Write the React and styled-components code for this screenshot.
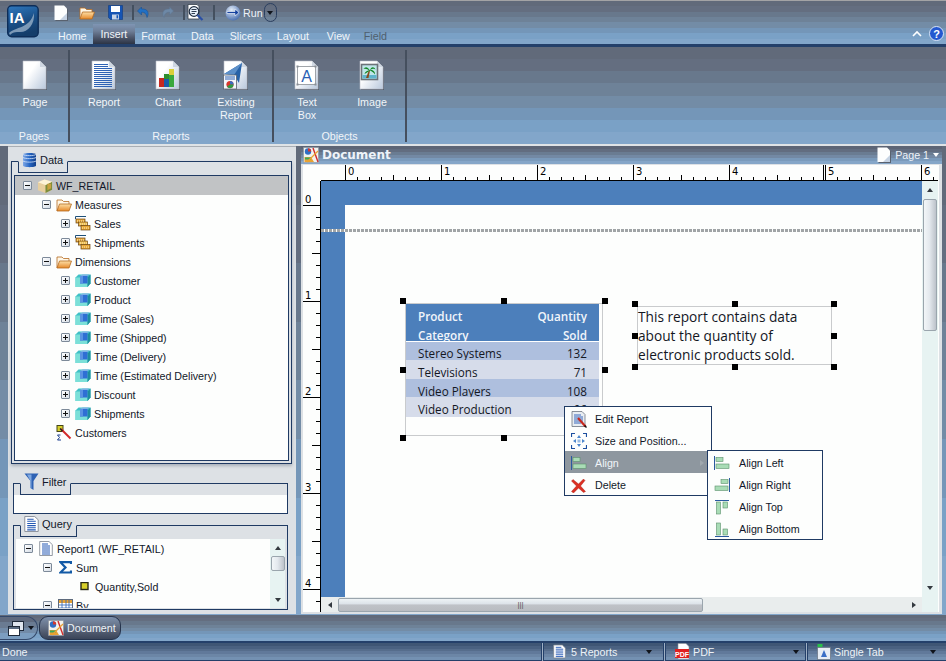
import React from "react";
import styled, { createGlobalStyle } from "styled-components";

const bands = (colors) =>
  `linear-gradient(180deg, ${colors
    .map((c, i) => `${c} ${(i / colors.length) * 100}% ${((i + 1) / colors.length) * 100}%`)
    .join(", ")})`;

const BAR = ["#616a7a", "#646e80", "#68788c", "#6e8298", "#738ca6", "#7496b8", "#7aa1c6", "#82a6ca"];
const STATUS = ["#3f5675", "#4a6181", "#566d8c", "#61799a", "#6c86a6", "#7491b2"];

const GlobalStyle = createGlobalStyle`
  html, body { margin: 0; padding: 0; background: #dde1e5; }
  body { font-family: "Liberation Sans", Arial, sans-serif; font-size: 10.7px; color: #12182a; }
  * { box-sizing: border-box; }
`;

const Shell = styled.div`
  width: 946px;
  height: 661px;
  display: flex;
  flex-direction: column;
  overflow: hidden;
`;

/* top bar */
const TopBar = styled.header`
  height: 44px;
  border-top: 1px solid #a3a3a5;
  background: ${bands(BAR)};
  display: flex;
  flex: none;
`;
const LogoBox = styled.div`
  width: 52px;
  padding: 4px 0 0 7px;
  flex: none;
`;
const TopColumn = styled.div`
  flex: 1;
  display: flex;
  flex-direction: column;
`;
const QuickRow = styled.div`
  height: 23px;
  display: flex;
  align-items: center;
  padding-left: 2px;
`;
const QuickBtn = styled.span`
  display: flex;
  margin-right: ${(p) => p.$gap || 0}px;
`;
const QuickSep = styled.i`
  width: 2px;
  height: 15px;
  background: #44505f;
  margin-right: ${(p) => p.$gap || 3}px;
`;
const RunLabel = styled.span`
  color: #eef3f8;
  margin-left: 2px;
`;
const RunDrop = styled.span`
  width: 13px;
  height: 19px;
  border: 1px solid #2b3f60;
  border-radius: 7px;
  margin-left: 1px;
  display: flex;
  align-items: center;
  justify-content: center;
`;
const Caret = styled.i`
  width: 0;
  height: 0;
  flex: none;
  border-left: 3.5px solid transparent;
  border-right: 3.5px solid transparent;
  border-top: 4px solid ${(p) => p.$color || "#10141c"};
`;
const TabStrip = styled.nav`
  height: 20px;
  display: flex;
  align-items: stretch;
`;
const MenuTab = styled.span`
  display: flex;
  align-items: center;
  margin-left: ${(p) => p.$lead || 0}px;
  margin-right: ${(p) => p.$gap}px;
  padding: ${(p) => (p.$active ? "0 8px 1px" : "4px 0 0")};
  color: ${(p) => (p.$dim ? "#4f5f6d" : "#f1f5f9")};
  background: ${(p) => (p.$active ? "linear-gradient(180deg, #7f95b4 0%, #6f7f98 35%, #4b5468 70%, #2c3445 100%)" : "none")};
`;
const TabEnd = styled.span`
  margin-left: auto;
  display: flex;
  align-items: center;
  gap: 7px;
  padding: 0 2px 1px 0;
`;
const NavyLine = styled.div`
  height: 3px;
  background: #24406a;
  flex: none;
`;

/* ribbon */
const Ribbon = styled.section`
  height: 97px;
  flex: none;
  padding-top: 3px;
  background: ${bands(BAR)};
  display: flex;
`;
const RibbonGroup = styled.div`
  width: ${(p) => p.$w}px;
  height: 92px;
  border-right: 2px solid #454f5e;
  display: flex;
  flex-direction: column;
`;
const ToolRow = styled.div`
  flex: 1;
  display: flex;
`;
const Tool = styled.div`
  width: ${(p) => p.$w}px;
  flex: none;
  padding-top: 10px;
  display: flex;
  flex-direction: column;
  align-items: center;
  color: #f1f5f9;
  text-align: center;
  line-height: 13px;
`;
const ToolText = styled.span`
  margin-top: 5px;
`;
const GroupLabel = styled.div`
  height: 13px;
  color: #f1f5f9;
  text-align: center;
  line-height: 15px;
`;

/* main */
const Main = styled.main`
  flex: none;
  height: 471px;
  border-top: 2px solid #dfe3e6;
  background: ${bands(BAR)};
  display: flex;
  padding: 0 4px 1px 8px;
  gap: 5px;
`;
const DataPanel = styled.aside`
  width: 288px;
  background: #dde1e5;
  display: flex;
  flex-direction: column;
  padding: 14px 0 0 3px;
  border-top: 1px solid #a9aeb4;
`;
const Group = styled.div`
  position: relative;
  border: 1px solid #1f3a63;
  width: ${(p) => p.$w}px;
  height: ${(p) => p.$h}px;
  margin: ${(p) => p.$margin || 0};
  padding: ${(p) => p.$pad || 0};
  box-shadow: ${(p) => (p.$shadow ? "0 2px 3px #a9b1ba" : "none")};
`;
const GroupTab = styled.div`
  position: absolute;
  left: ${(p) => p.$left}px;
  top: -1px;
  width: ${(p) => p.$w}px;
  height: 12px;
  background: #dde1e5;
  border: 1px solid #1f3a63;
  border-top: 1px solid #dde1e5;
`;
const TabLabel = styled.div`
  height: 18px;
  margin-top: -11px;
  display: flex;
  align-items: center;
  gap: 3px;
  padding-left: 3px;
  font-size: 11px;
`;
const TreeBox = styled.div`
  background: #fdfefd;
  border: 1px solid #1f3a63;
  height: 100%;
  overflow: hidden;
`;
const TreeRow = styled.div`
  height: 19px;
  display: flex;
  align-items: center;
  padding-left: ${(p) => 8 + p.$level * 19}px;
  background: ${(p) => (p.$selected ? "#c1c3c5" : "transparent")};
`;
const Expander = styled.span`
  width: 9px;
  height: 9px;
  flex: none;
  margin-right: 5px;
  visibility: ${(p) => (p.$none ? "hidden" : "visible")};
  border: 1px solid #7d8a99;
  border-radius: 1px;
  background: linear-gradient(135deg, #fff, #d5dde6);
  display: flex;
  align-items: center;
  justify-content: center;
  position: relative;
  &::before {
    content: "";
    width: 5px;
    height: 1px;
    background: #111;
  }
  &::after {
    content: "";
    position: absolute;
    width: 1px;
    height: 5px;
    background: #111;
    display: ${(p) => (p.$open ? "none" : "block")};
  }
`;
const TreeIcon = styled.span`
  width: 16px;
  height: 16px;
  flex: none;
  display: flex;
  align-items: center;
  justify-content: center;
  margin-right: 3px;
`;
const FilterWell = styled.div`
  height: 18px;
  margin-top: 11px;
  background: #fdfefd;
`;
const QueryBody = styled.div`
  display: flex;
  height: 100%;
  padding: 13px 2px 1px 2px;
`;
const QueryTree = styled.div`
  flex: 1;
  background: #fdfefd;
  overflow: hidden;
`;

/* scrollbars */
const VBar = styled.div`
  width: ${(p) => p.$w}px;
  background: #e7f3f2;
  display: flex;
  flex-direction: column;
  flex: none;
  align-items: center;
  height: 100%;
`;
const HBar = styled.div`
  height: 15px;
  background: #e9eded;
  display: flex;
  align-items: center;
`;
const ArrowBtn = styled.span`
  flex: none;
  display: flex;
  align-items: center;
  justify-content: center;
  width: ${(p) => p.$w || 15}px;
  height: ${(p) => p.$h || 15}px;
  margin-top: ${(p) => (p.$end ? "auto" : 0)};
  margin-left: ${(p) => (p.$after ? "auto" : 0)};
`;
const Tri = styled.i`
  width: 0;
  height: 0;
  ${(p) => {
    const c = p.$color || "#33393f";
    if (p.$dir === "up") return `border-left:3.5px solid transparent;border-right:3.5px solid transparent;border-bottom:4px solid ${c};`;
    if (p.$dir === "down") return `border-left:3.5px solid transparent;border-right:3.5px solid transparent;border-top:4px solid ${c};`;
    if (p.$dir === "left") return `border-top:3.5px solid transparent;border-bottom:3.5px solid transparent;border-right:4px solid ${c};`;
    return `border-top:3.5px solid transparent;border-bottom:3.5px solid transparent;border-left:4px solid ${c};`;
  }}
`;
const VThumb = styled.span`
  width: ${(p) => p.$w}px;
  height: ${(p) => p.$h}px;
  flex: none;
  border: 1px solid #9aa5ad;
  border-radius: 2px;
  background: linear-gradient(90deg, #f2f6f8 0%, #e4e9ee 45%, #bcc2ca 100%);
`;
const HThumb = styled.span`
  width: ${(p) => p.$w}px;
  height: 14px;
  flex: none;
  border: 1px solid #9aa5ad;
  border-radius: 2px;
  background: linear-gradient(180deg, #eef3f5 0%, #dde3e9 40%, #bfc2c7 50%, #b9bcc1 100%);
  display: flex;
  align-items: center;
  justify-content: center;
  color: #555;
  font-size: 8px;
  line-height: 10px;
`;

/* document pane */
const DocPane = styled.section`
  flex: 1;
  background: #dde1e5;
  display: flex;
  flex-direction: column;
  padding: 0 3px 2px 2px;
`;
const DocTitle = styled.div`
  height: 18px;
  flex: none;
  margin: 0 -3px 0 -2px;
  padding: 0 3px 0 2px;
  background: ${bands(["#5c6475", "#626d80", "#6a7c92", "#7389a4", "#7a9abb", "#85a6c8"])};
  display: flex;
  align-items: center;
  color: #eef3f9;
`;
const DocName = styled.span`
  font-family: "DejaVu Sans", sans-serif;
  font-size: 12px;
  font-weight: 700;
  margin-left: 3px;
`;
const PageBadge = styled.span`
  margin-left: auto;
  display: flex;
  align-items: center;
  gap: 4px;
`;
const DocGrid = styled.div`
  flex: 1;
  min-height: 0;
  display: grid;
  grid-template-columns: 18px 601px 16px;
  grid-template-rows: 16px 416px 15px;
  background: #fdfefd;
  margin-top: 1px;
`;
const RulerTop = styled.div`
  grid-column: 2 / 4;
  overflow: hidden;
  display: flex;
`;
const RulerLeft = styled.div`
  grid-row: 2 / 4;
  overflow: hidden;
  display: flex;
`;
const Canvas = styled.div`
  position: relative;
  background: #4c7fbb;
  padding: 24px 0 0 24px;
  overflow: hidden;
`;
const Sheet = styled.div`
  background: #fdfefd;
  height: 100%;
`;
const BandLine = styled.div`
  position: absolute;
  left: 0;
  right: 0;
  top: 48px;
  height: 3px;
  background: repeating-linear-gradient(90deg, #a0a4a6 0 3px, #fdfefd 3px 4px);
`;
const Frame = styled.div`
  position: absolute;
  left: ${(p) => p.$x}px;
  top: ${(p) => p.$y}px;
  width: ${(p) => p.$w}px;
  height: ${(p) => p.$h}px;
  border: 1px solid #c9cbcd;
`;
const Handle = styled.i`
  position: absolute;
  width: 6px;
  height: 6px;
  background: #000;
  ${(p) => (p.$h === "l" ? "left:-6px;" : p.$h === "c" ? "left:calc(50% - 3px);" : "right:-6px;")}
  ${(p) => (p.$v === "t" ? "top:-6px;" : p.$v === "m" ? "top:calc(50% - 3px);" : "bottom:-6px;")}
`;
const ReportTable = styled.div`
  width: 193px;
  font-family: "Open Sans", "Noto Sans", sans-serif;
  font-size: 11.7px;
`;
const TableRow = styled.div`
  display: flex;
  justify-content: space-between;
  height: ${(p) => p.$h}px;
  padding: 0 12px;
  overflow: hidden;
  color: ${(p) => (p.$head ? "#f1f5fa" : "#14171f")};
  font-weight: ${(p) => (p.$head ? 600 : 400)};
  background: ${(p) => p.$bg};
  line-height: ${(p) => p.$lh}px;
  border-bottom: ${(p) => (p.$rule ? "1px solid #fff" : "0")};
`;
const NoteText = styled.p`
  margin: 0;
  font-family: "Open Sans", "Noto Sans", sans-serif;
  font-size: 13.7px;
  line-height: 19px;
  color: #14171f;
  white-space: nowrap;
`;
const ContextMenu = styled.ul`
  position: absolute;
  left: ${(p) => p.$x}px;
  top: ${(p) => p.$y}px;
  width: ${(p) => p.$w}px;
  margin: 0;
  padding: 0;
  list-style: none;
  background: #fdfefd;
  border: 1px solid #1f3a63;
  z-index: ${(p) => p.$z || 1};
`;
const MenuRow = styled.li`
  height: 22px;
  display: flex;
  align-items: center;
  padding: 2px 7px 0 0;
  color: ${(p) => (p.$hot ? "#f1f5f9" : "#12182a")};
  background: ${(p) => (p.$hot ? "#8e979f" : "transparent")};
`;
const MenuIcon = styled.span`
  width: ${(p) => p.$w}px;
  flex: none;
  display: flex;
  justify-content: center;
  padding-right: 3px;
`;
const MenuArrow = styled.span`
  margin-left: auto;
  display: flex;
`;

/* bottom */
const TabDock = styled.div`
  height: 26px;
  flex: none;
  background: ${bands(BAR)};
  display: flex;
  align-items: center;
  gap: 1px;
`;
const DockMenu = styled.span`
  width: 38px;
  height: 24px;
  border: 1px solid #34496b;
  border-left: 0;
  border-radius: 0 12px 12px 0;
  background: ${bands(["#5f6a7e", "#6a7b92", "#728ba8", "#7b9dc0"])};
  display: flex;
  align-items: center;
  justify-content: center;
  gap: 4px;
  padding-left: 5px;
`;
const DockTab = styled.span`
  width: 82px;
  height: 24px;
  border: 1px solid #26344d;
  border-radius: 9px;
  background: linear-gradient(180deg, #7d90ab 0%, #667389 40%, #4c566a 75%, #3a4458 100%);
  display: flex;
  align-items: center;
  gap: 3px;
  padding-left: 8px;
  color: #edf2f7;
`;
const StatusBar = styled.footer`
  height: 20px;
  flex: none;
  border-top: 2px solid #24406a;
  background: #9fb0c4;
  display: flex;
  gap: 1px;
  color: #edf2f7;
`;
const StatusCell = styled.span`
  width: ${(p) => p.$w}px;
  flex: none;
  display: flex;
  align-items: center;
  gap: 3px;
  padding: 0 ${(p) => p.$right}px 0 ${(p) => p.$left}px;
  border: 1px solid #24406a;
  border-top: 0;
  border-left-width: ${(p) => (p.$first ? 0 : 1)}px;
  border-right-width: ${(p) => (p.$last ? 0 : 1)}px;
  background: ${bands(STATUS)};
`;
const StatusGrow = styled.span`
  margin-left: ${(p) => p.$lead || 0}px;
  margin-right: auto;
`;

/* icons */
const Paper = ({ children, w = 26, h = 31 }) => (
  <svg width={w} height={h} viewBox="0 0 26 31">
    <defs>
      <linearGradient id="paperFill" x1="0.3" y1="0.4" x2="1" y2="1">
        <stop offset="0" stopColor="#ffffff" />
        <stop offset="1" stopColor="#b9c8dc" />
      </linearGradient>
    </defs>
    <path d="M2 2H19L25 8V30H2Z" fill="#59626f" />
    <path d="M1 1H18L24 7V29H1Z" fill="url(#paperFill)" stroke="#b8bec6" strokeWidth="0.6" />
    <path d="M18 1V7H24Z" fill="#cfd7e2" />
    {children}
  </svg>
);

const ReportLines = ({ color = "#2f62b4", top = 4, bottom = 27, right = 21 }) => {
  const ys = [];
  for (let y = top; y < bottom; y += 2) ys.push(y);
  return ys.map((y) => <rect key={y} x="3" y={y} width={y < 8 ? 14 : right - 3} height="1" fill={color} />);
};

const Logo = () => (
  <svg width="32" height="33" viewBox="0 0 32 33">
    <defs>
      <linearGradient id="logoFill" x1="0" y1="0" x2="0.3" y2="1">
        <stop offset="0" stopColor="#2f79c0" />
        <stop offset="0.6" stopColor="#1a4e85" />
        <stop offset="1" stopColor="#143d6a" />
      </linearGradient>
    </defs>
    <rect x="0.7" y="0.7" width="30.5" height="31" rx="4" fill="url(#logoFill)" stroke="#0d2d58" strokeWidth="1.4" />
    <path d="M2 28C10 21 22 24 27 8 28 20 20 28 12 27 8 26.6 5 27.5 3 30Z" fill="#9fb6cc" opacity="0.75" />
    <text x="2.5" y="18" fontFamily="Liberation Sans" fontWeight="700" fontSize="15" fill="#fff">IA</text>
  </svg>
);

const Folder = ({ size = 16 }) => (
  <svg width={size} height={size} viewBox="0 0 16 16">
    <defs>
      <linearGradient id="folderFill" x1="0" y1="0" x2="0" y2="1">
        <stop offset="0" stopColor="#fde0a8" />
        <stop offset="1" stopColor="#e6892a" />
      </linearGradient>
    </defs>
    <path d="M1 14V3H6L7.5 4.5H13V7" fill="#fff7e6" stroke="#b46a1f" strokeWidth="0.8" />
    <path d="M1 14L3.5 7H15.5L13 14Z" fill="url(#folderFill)" stroke="#b46a1f" strokeWidth="0.8" />
  </svg>
);

const Floppy = () => (
  <svg width="15" height="15" viewBox="0 0 15 15">
    <path d="M0.5 0.5H14.5V14.5H2.5L0.5 12.5Z" fill="#1554b4" stroke="#0f3a80" strokeWidth="0.6" />
    <rect x="3" y="1" width="9" height="6" fill="#fff" />
    <rect x="4" y="9.5" width="7" height="5" fill="#c8d4e6" />
    <rect x="8.5" y="10.2" width="1.6" height="3.2" fill="#1554b4" />
  </svg>
);

const Undo = ({ flip, color = "#2170c4" }) => (
  <svg width="13" height="13" viewBox="0 0 13 13" style={flip ? { transform: "scaleX(-1)" } : undefined}>
    <path d="M4.5 1L0.5 5L4.5 9V6.3C7.5 6.1 9.3 7.4 10 11.5 12.5 7 11 2.6 4.5 3Z" fill={color} stroke={flip ? "#5d7590" : "#164c8e"} strokeWidth="0.5" />
  </svg>
);

const Preview = () => (
  <svg width="17" height="18" viewBox="0 0 17 18">
    <path d="M1 0.5H10L12 2.5V15H1Z" fill="#fff" stroke="#39424e" strokeWidth="0.8" />
    <circle cx="7" cy="7.5" r="4.8" fill="#e8f1fb" stroke="#1c2a3e" strokeWidth="1.2" />
    <path d="M4.5 5.5H9.5M4.5 7.5H9.5M4.5 9.5H8" stroke="#1c2a3e" strokeWidth="0.9" />
    <path d="M10.5 11L15.5 16" stroke="#2a4fa5" strokeWidth="2.2" />
  </svg>
);

const RunGlobe = () => (
  <svg width="16" height="16" viewBox="0 0 16 16">
    <defs>
      <radialGradient id="runFill" cx="0.4" cy="0.3" r="0.8">
        <stop offset="0" stopColor="#e4edf8" />
        <stop offset="1" stopColor="#3a62a8" />
      </radialGradient>
    </defs>
    <circle cx="8" cy="8" r="7.5" fill="url(#runFill)" />
    <path d="M2 6.5H10V4L14 7.5 10 11V8.5H2Z" fill="#1642a0" stroke="#fff" strokeWidth="0.6" />
  </svg>
);

const ChevronUp = () => (
  <svg width="10" height="7" viewBox="0 0 10 7">
    <path d="M1 6L5 2L9 6" fill="none" stroke="#fff" strokeWidth="1.6" />
  </svg>
);

const HelpBadge = () => (
  <svg width="15" height="15" viewBox="0 0 15 15">
    <circle cx="7.5" cy="7.5" r="7" fill="#2458d0" stroke="#dbe6f6" strokeWidth="1" />
    <text x="7.5" y="11.5" textAnchor="middle" fontFamily="Liberation Sans" fontWeight="700" fontSize="11" fill="#fff">?</text>
  </svg>
);

const ChartPaper = () => (
  <Paper>
    <rect x="4" y="18" width="5" height="9" fill="#c8281e" />
    <rect x="9" y="14" width="5" height="13" fill="#2e8f2e" />
    <rect x="14" y="9" width="5" height="18" fill="#dbcf3a" />
    <rect x="14" y="15" width="5" height="12" fill="#3aa83c" />
    <rect x="9" y="19" width="5" height="8" fill="#1c5ca8" />
  </Paper>
);

const ExistingPaper = () => (
  <Paper>
    <path d="M1 14L19 3 16 23 11 15Z" fill="#2762a8" />
    <path d="M1 14L19 3 11 15Z" fill="#5c8fc8" />
    <rect x="0.5" y="15" width="13" height="14" fill="#f4f7fb" stroke="#59626f" strokeWidth="0.8" />
    <path d="M2 17H12M2 19H12" stroke="#2f62b4" />
    <circle cx="7" cy="24.5" r="3.6" fill="#d8372c" />
    <path d="M7 24.5V20.9A3.6 3.6 0 0 1 10.6 24.5Z" fill="#3c6bc0" />
    <path d="M7 24.5H10.6A3.6 3.6 0 0 1 4 26.6Z" fill="#2f9a45" />
  </Paper>
);

const TextPaper = () => (
  <Paper>
    <rect x="3.5" y="6.5" width="18" height="18" fill="#fff" stroke="#8a8f96" strokeWidth="0.8" />
    <rect x="2.5" y="5.5" width="2" height="2" fill="#8a8f96" />
    <rect x="20.5" y="5.5" width="2" height="2" fill="#8a8f96" />
    <rect x="2.5" y="23.5" width="2" height="2" fill="#8a8f96" />
    <rect x="20.5" y="23.5" width="2" height="2" fill="#8a8f96" />
    <text x="12.5" y="22" textAnchor="middle" fontFamily="Liberation Sans" fontSize="16" fill="#2b5fb5">A</text>
  </Paper>
);

const ImagePaper = () => (
  <Paper>
    <rect x="2.5" y="4.5" width="16" height="15" fill="#bfe6e8" stroke="#6d7278" strokeWidth="1.6" />
    <rect x="3.5" y="15" width="14" height="3.5" fill="#5fb4cc" />
    <path d="M10 10L7 18H9.5L11 10.5Z" fill="#8a4a1a" />
    <path d="M11 10.5C8 6 6 7 4.5 9 7 8.5 9 9.5 10 10.5 8 10.5 6 12 5.5 14 8 12.5 10 11.5 11 10.5 13 11.5 15 12.5 16 14.5 16.5 11.5 13.5 9.5 11.5 10 13 8.5 15 8.5 16.5 9.5 15 6.5 12 6.5 11 10.5Z" fill="#14882a" />
  </Paper>
);

const SmallPage = () => (
  <svg width="14" height="16" viewBox="0 0 14 16">
    <path d="M1.5 1.5H11L14 4.5V16H1.5Z" fill="#59626f" />
    <path d="M0.5 0.5H10L13 3.5V15H0.5Z" fill="#fdfefe" />
    <path d="M13 8L6 15H13Z" fill="#c6d3e3" />
  </svg>
);

const Cube = () => (
  <svg width="16" height="15" viewBox="0 0 16 15">
    <path d="M0.5 4.5L3.5 1.5H15.5V10.5L12.5 14H0.5Z" fill="#3fc0c6" />
    <path d="M0.5 4.5H12.5V14H0.5Z" fill="#7be0d8" />
    <path d="M12.5 4.5L15.5 1.5V10.5L12.5 14Z" fill="#1d8d9e" />
    <rect x="5" y="3" width="7.5" height="7.5" fill="#2f6fd4" />
    <path d="M5 3L7.5 1.5H14.5L12.5 3Z" fill="#7eb2e6" />
    <rect x="5" y="3" width="3" height="7.5" fill="#5a93e2" />
  </svg>
);

const BigCube = () => (
  <svg width="17" height="16" viewBox="0 0 17 16">
    <path d="M1 4L8 1L16 3.5V12L9 15.5L1 12.5Z" fill="#e8cf9f" />
    <path d="M9 7V15.5L16 12V3.5Z" fill="#7d8d3a" />
    <path d="M1 4L8 1L16 3.5L9 7Z" fill="#fdf3d8" />
    <path d="M11 5.5H15V10.5L11 12.5Z" fill="#c9a13f" />
  </svg>
);

const FolderOpen = () => <Folder size={16} />;

const Measure = () => (
  <svg width="16" height="15" viewBox="0 0 16 15">
    <path d="M0.5 0.5H11" stroke="#1c4f78" strokeWidth="1" />
    <path d="M0.5 0.5V3" stroke="#1c4f78" />
    <rect x="1" y="3" width="9" height="4" fill="#e8a838" stroke="#6b4410" strokeWidth="0.7" />
    <rect x="3.5" y="6" width="9" height="4" fill="#efbe52" stroke="#6b4410" strokeWidth="0.7" />
    <rect x="6" y="9.5" width="9" height="4.5" fill="#e8a838" stroke="#6b4410" strokeWidth="0.7" />
    <path d="M2 5H9M5 8H12M7 12H14" stroke="#fff1c4" strokeDasharray="1 1" />
  </svg>
);

const CustomerIcon = () => (
  <svg width="16" height="16" viewBox="0 0 16 16">
    <rect x="1" y="0.5" width="6" height="6" fill="#d6cf2b" stroke="#45461a" />
    <path d="M5 4L14.5 13.5" stroke="#d22b2b" strokeWidth="2" />
    <path d="M4 3.5L6.5 6" stroke="#222" strokeWidth="1.4" />
    <path d="M4.5 10H1.5L3.5 12.5 1.5 15H5" fill="none" stroke="#1c3f90" strokeWidth="1" />
  </svg>
);

const Cylinder = () => (
  <svg width="15" height="16" viewBox="0 0 15 16">
    <defs>
      <linearGradient id="dbFill" x1="0" y1="0" x2="1" y2="0">
        <stop offset="0" stopColor="#7da7e6" />
        <stop offset="0.5" stopColor="#2566c4" />
        <stop offset="1" stopColor="#123f8a" />
      </linearGradient>
    </defs>
    <path d="M1 2.5C1 0.5 14 0.5 14 2.5V13.5C14 15.7 1 15.7 1 13.5Z" fill="url(#dbFill)" />
    <path d="M1 5.5C3 7 12 7 14 5.5M1 9C3 10.5 12 10.5 14 9M1 2.5C3 4 12 4 14 2.5" fill="none" stroke="#d8e6fa" strokeWidth="0.8" />
  </svg>
);

const Funnel = () => (
  <svg width="15" height="18" viewBox="0 0 15 18">
    <path d="M0.5 0.5H14.5L9.5 8V17L6.5 15V8Z" fill="#2e62b4" />
    <path d="M3 1.5H7.5V15.5L6.5 15V8Z" fill="#7fa8e0" />
  </svg>
);

const DocBlue = ({ w = 14, h = 15 }) => (
  <svg width={w} height={h} viewBox="0 0 14 15">
    <path d="M0.7 0.5H10L13.3 3.6V14.5H0.7Z" fill="#fff" stroke="#7b838e" strokeWidth="0.8" />
    <path d="M3 3H9M3 5H11M3 7H11M3 9H11M3 11H11M3 13H11" stroke="#2458b4" strokeWidth="1" />
  </svg>
);

const Sigma = () => (
  <svg width="13" height="13" viewBox="0 0 13 13">
    <path d="M12 3V1.2H1.5L6.5 6.5 1.5 11.5H12V9.5" fill="none" stroke="#135aa6" strokeWidth="2.2" />
  </svg>
);

const FieldDot = () => (
  <svg width="9" height="9" viewBox="0 0 9 9">
    <rect x="1" y="0.5" width="7" height="7" fill="#d8d02a" stroke="#2a2a14" strokeWidth="1.4" />
  </svg>
);

const GridIcon = () => (
  <svg width="15" height="14" viewBox="0 0 15 14">
    <rect x="0.5" y="0.5" width="14" height="13" fill="#fff" stroke="#5d6a7c" />
    <rect x="1" y="1" width="13" height="3" fill="#e8a232" />
    <path d="M1 6H14M1 9H14M1 12H14M4 1V13M8 1V13M11 1V13" stroke="#2c62b4" strokeWidth="0.8" />
  </svg>
);

const DocumentBadge = ({ size = 16 }) => (
  <svg width={size} height={size} viewBox="0 0 16 16">
    <rect x="0.5" y="0.5" width="15" height="15" fill="#f2f3ee" stroke="#8a919b" strokeWidth="0.6" />
    <circle cx="5" cy="4.5" r="3.2" fill="#2f6fc4" />
    <path d="M5 4.5V1.3A3.2 3.2 0 0 1 8.2 4.5Z" fill="#d8372c" />
    <path d="M1.5 10L8 10 11 15H1.5Z" fill="#e8a232" />
    <path d="M2 11.5H8" stroke="#3aa85c" strokeWidth="2" />
    <path d="M10 1L15 15" stroke="#d22b2b" strokeWidth="1.4" />
    <path d="M15 4L4 15" stroke="#e8a232" strokeWidth="1.2" />
  </svg>
);

const EditReportIcon = () => (
  <svg width="16" height="17" viewBox="0 0 16 17">
    <path d="M1 0.5H11L14 3.5V15.5H1Z" fill="#e8edf2" stroke="#6d7580" strokeWidth="0.8" />
    <path d="M3 4H10M3 6H12M3 8H12M3 10H12M3 12H10" stroke="#2458b4" strokeWidth="0.9" />
    <path d="M7 7L14.5 15.5" stroke="#c8281e" strokeWidth="2.2" />
    <path d="M13.5 14.5L15.5 16.5" stroke="#111" strokeWidth="1.4" />
  </svg>
);

const SizeIcon = () => (
  <svg width="16" height="16" viewBox="0 0 16 16">
    <path d="M0.5 4V0.5H4M12 0.5H15.5V4M15.5 12V15.5H12M4 15.5H0.5V12" fill="none" stroke="#1d4fa0" strokeWidth="1.2" />
    <path d="M8 2L10 5H6ZM8 14L6 11H10ZM2 8L5 6V10ZM14 8L11 10V6Z" fill="#4d86cc" />
    <rect x="6.5" y="6.5" width="3" height="3" fill="#9bbce2" />
  </svg>
);

const DeleteIcon = () => (
  <svg width="15" height="15" viewBox="0 0 15 15">
    <path d="M2 1.5L7.5 6 12.5 1 14 2.5 9.5 8 14.5 13.5 12.5 14.5 7.5 10 2.5 15 0.5 13.5 5.5 8 0.5 3Z" fill="#dc2f22" stroke="#a01a12" strokeWidth="0.4" />
  </svg>
);

const AlignIcon = ({ side }) => {
  const bar = { fill: "#a9dcb6", stroke: "#5b8f6c", strokeWidth: 0.6 };
  const rule = "#2a5aa0";
  if (side === "left")
    return (
      <svg width="16" height="14" viewBox="0 0 16 14">
        <path d="M0.5 0V14" stroke={rule} />
        <rect x="2" y="1.5" width="7" height="4" {...bar} />
        <rect x="2" y="8" width="13" height="4.5" {...bar} />
      </svg>
    );
  if (side === "right")
    return (
      <svg width="16" height="14" viewBox="0 0 16 14">
        <path d="M15.5 0V14" stroke={rule} />
        <rect x="7" y="1.5" width="7" height="4" {...bar} />
        <rect x="1" y="8" width="13" height="4.5" {...bar} />
      </svg>
    );
  if (side === "top")
    return (
      <svg width="14" height="15" viewBox="0 0 14 15">
        <path d="M0 0.5H14" stroke={rule} />
        <rect x="1.5" y="2" width="4" height="12" {...bar} />
        <rect x="8" y="2" width="4.5" height="6" {...bar} />
      </svg>
    );
  return (
    <svg width="14" height="15" viewBox="0 0 14 15">
      <path d="M0 14.5H14" stroke={rule} />
      <rect x="1.5" y="1" width="4" height="12" {...bar} />
      <rect x="8" y="7" width="4.5" height="6" {...bar} />
    </svg>
  );
};

const PdfIcon = () => (
  <svg width="15" height="17" viewBox="0 0 15 17">
    <path d="M3 0.5H11L14 3.5V16H3Z" fill="#fff" stroke="#8a919b" strokeWidth="0.6" />
    <rect x="0" y="6" width="14" height="9" fill="#e01f1f" />
    <text x="7" y="13.5" textAnchor="middle" fontFamily="Liberation Sans" fontWeight="700" fontSize="7" fill="#fff">PDF</text>
  </svg>
);

const TabIcon = () => (
  <svg width="14" height="17" viewBox="0 0 14 17">
    <rect x="0.5" y="1" width="5" height="3" fill="#29c04a" />
    <rect x="0.5" y="4.5" width="13" height="12" fill="#e7edf5" stroke="#66717f" strokeWidth="0.7" />
    <path d="M7 7L10 14H4Z" fill="#3b6fc6" />
  </svg>
);

const WindowsIcon = () => (
  <svg width="16" height="15" viewBox="0 0 16 15">
    <rect x="4.5" y="0.5" width="11" height="9" fill="#dfe5ee" stroke="#1f2a3a" />
    <rect x="0.5" y="5.5" width="11" height="9" fill="#fff" stroke="#1f2a3a" />
    <rect x="1" y="6" width="10" height="2" fill="#5a6a80" />
  </svg>
);

const HorizontalRuler = () => {
  const ticks = [];
  for (let i = 0; i <= 51; i++) {
    const x = 25 + i * 12;
    const major = i % 8 === 0;
    const mid = i % 4 === 0;
    ticks.push(<path key={i} d={`M${x - 0.5} 15V${major ? 0 : mid ? 10 : 12}`} stroke="#000" />);
  }
  return (
    <svg width="617" height="16" viewBox="0 0 617 16">
      <rect width="617" height="16" fill="#fdfefd" />
      <path d="M0 15.5H617" stroke="#000" />
      {ticks}
      <path d="M502.5 0V15" stroke="#000" />
      {[0, 1, 2, 3, 4, 5, 6].map((n) => (
        <text key={n} x={27 + n * 96} y="10" fontFamily="DejaVu Sans" fontSize="10" fill="#000">{n}</text>
      ))}
    </svg>
  );
};

const VerticalRuler = () => {
  const ticks = [];
  for (let i = 0; i <= 34; i++) {
    const y = 24 + i * 12;
    const major = i % 8 === 0;
    const mid = i % 4 === 0;
    ticks.push(<path key={i} d={`M${major ? 0 : mid ? 9 : 13} ${y + 0.5}H17`} stroke="#000" />);
  }
  return (
    <svg width="18" height="431" viewBox="0 0 18 431">
      <rect width="18" height="431" fill="#fdfefd" />
      <path d="M17.5 0V431" stroke="#000" />
      {ticks}
      {[0, 1, 2, 3, 4].map((n) => (
        <text key={n} x="2" y={22 + n * 96} fontFamily="DejaVu Sans" fontSize="10" fill="#000">{n}</text>
      ))}
    </svg>
  );
};

const Eight = ["t", "m", "b"].flatMap((v) => ["l", "c", "r"].map((h) => ({ h, v }))).filter((p) => !(p.h === "c" && p.v === "m"));

const Handles = () => Eight.map((p) => <Handle key={p.h + p.v} $h={p.h} $v={p.v} />);

const Tree = ({ rows }) =>
  rows.map((r) => (
    <TreeRow key={r.id || r.label} $level={r.level} $selected={r.selected}>
      <Expander $open={r.open} $none={r.open === undefined} />
      <TreeIcon>{r.icon}</TreeIcon>
      {r.label}
    </TreeRow>
  ));

const dataRows = [
  { label: "WF_RETAIL", level: 0, open: true, selected: true, icon: <BigCube /> },
  { label: "Measures", level: 1, open: true, icon: <FolderOpen /> },
  { label: "Sales", level: 2, open: false, icon: <Measure /> },
  { id: "m-ship", label: "Shipments", level: 2, open: false, icon: <Measure /> },
  { label: "Dimensions", level: 1, open: true, icon: <FolderOpen /> },
  ...["Customer", "Product", "Time (Sales)", "Time (Shipped)", "Time (Delivery)", "Time (Estimated Delivery)", "Discount", "Shipments"].map(
    (label) => ({ label, level: 2, open: false, icon: <Cube /> })
  ),
  { label: "Customers", level: 1, icon: <CustomerIcon /> },
];

const queryRows = [
  { label: "Report1 (WF_RETAIL)", level: 0, open: true, icon: <DocBlue /> },
  { label: "Sum", level: 1, open: true, icon: <Sigma /> },
  { label: "Quantity,Sold", level: 2, icon: <FieldDot /> },
  { label: "By", level: 1, open: true, icon: <GridIcon /> },
];

const salesRows = [
  ["Stereo Systems", "132", "#aebfde", 18, 22],
  ["Televisions", "71", "#d6dcea", 19, 24],
  ["Video Players", "108", "#aebfde", 18, 24],
  ["Video Production", "96", "#d6dcea", 20, 24],
];

const App = () => (
  <Shell>
    <GlobalStyle />
    <TopBar>
      <LogoBox>
        <Logo />
      </LogoBox>
      <TopColumn>
        <QuickRow>
          <QuickBtn $gap={11}><SmallPage /></QuickBtn>
          <QuickBtn $gap={13}><Folder /></QuickBtn>
          <QuickBtn $gap={9}><Floppy /></QuickBtn>
          <QuickSep />
          <QuickBtn $gap={11}><Undo /></QuickBtn>
          <QuickBtn $gap={9}><Undo flip color="#6d88a6" /></QuickBtn>
          <QuickSep $gap={2} />
          <QuickBtn $gap={9}><Preview /></QuickBtn>
          <QuickSep $gap={10} />
          <QuickBtn><RunGlobe /></QuickBtn>
          <RunLabel>Run</RunLabel>
          <RunDrop><Caret /></RunDrop>
        </QuickRow>
        <TabStrip>
          <MenuTab $lead={6} $gap={6}>Home</MenuTab>
          <MenuTab $active $gap={6}>Insert</MenuTab>
          <MenuTab $gap={16}>Format</MenuTab>
          <MenuTab $gap={16}>Data</MenuTab>
          <MenuTab $gap={15}>Slicers</MenuTab>
          <MenuTab $gap={18}>Layout</MenuTab>
          <MenuTab $gap={14}>View</MenuTab>
          <MenuTab $dim $gap={0}>Field</MenuTab>
          <TabEnd>
            <ChevronUp />
            <HelpBadge />
          </TabEnd>
        </TabStrip>
      </TopColumn>
    </TopBar>
    <NavyLine />
    <Ribbon>
      <RibbonGroup $w={70}>
        <ToolRow>
          <Tool $w={70}><Paper /><ToolText>Page</ToolText></Tool>
        </ToolRow>
        <GroupLabel>Pages</GroupLabel>
      </RibbonGroup>
      <RibbonGroup $w={204}>
        <ToolRow>
          <Tool $w={68}><Paper><ReportLines /></Paper><ToolText>Report</ToolText></Tool>
          <Tool $w={60}><ChartPaper /><ToolText>Chart</ToolText></Tool>
          <Tool $w={76}><ExistingPaper /><ToolText>Existing<br />Report</ToolText></Tool>
        </ToolRow>
        <GroupLabel>Reports</GroupLabel>
      </RibbonGroup>
      <RibbonGroup $w={133}>
        <ToolRow>
          <Tool $w={66}><TextPaper /><ToolText>Text<br />Box</ToolText></Tool>
          <Tool $w={64}><ImagePaper /><ToolText>Image</ToolText></Tool>
        </ToolRow>
        <GroupLabel>Objects</GroupLabel>
      </RibbonGroup>
    </Ribbon>
    <Main>
      <DataPanel>
        <Group $w={281} $h={303} $pad="13px 2px 2px 2px" $shadow>
          <GroupTab $left={6} $w={50}><TabLabel><Cylinder />Data</TabLabel></GroupTab>
          <TreeBox>
            <Tree rows={dataRows} />
          </TreeBox>
        </Group>
        <Group $w={275} $h={31} $margin="19px 0 0 2px">
          <GroupTab $left={6} $w={51}><TabLabel><Funnel />Filter</TabLabel></GroupTab>
          <FilterWell />
        </Group>
        <Group $w={275} $h={85} $margin="11px 0 0 2px">
          <GroupTab $left={6} $w={57}><TabLabel><DocBlue w={15} h={16} />Query</TabLabel></GroupTab>
          <QueryBody>
            <QueryTree>
              <Tree rows={queryRows} />
            </QueryTree>
            <VBar $w={15}>
              <ArrowBtn $h={17}><Tri $dir="up" /></ArrowBtn>
              <VThumb $w={14} $h={15} />
              <ArrowBtn $h={17} $end><Tri $dir="down" /></ArrowBtn>
            </VBar>
          </QueryBody>
        </Group>
      </DataPanel>
      <DocPane>
        <DocTitle>
          <DocumentBadge />
          <DocName>Document</DocName>
          <PageBadge>
            <SmallPage />
            Page 1
            <Caret $color="#fff" />
          </PageBadge>
        </DocTitle>
        <DocGrid>
          <span />
          <RulerTop><HorizontalRuler /></RulerTop>
          <RulerLeft><VerticalRuler /></RulerLeft>
          <Canvas>
            <Sheet />
            <BandLine />
            <Frame $x={84} $y={122} $w={198} $h={133}>
              <ReportTable>
                <TableRow $head $h={19} $bg="#4c7fbb" $lh={24}><span>Product</span><span>Quantity</span></TableRow>
                <TableRow $head $h={19} $bg="#4c7fbb" $lh={24} $rule><span>Category</span><span>Sold</span></TableRow>
                {salesRows.map(([name, qty, bg, h, lh]) => (
                  <TableRow key={name} $h={h} $bg={bg} $lh={lh}>
                    <span>{name}</span>
                    <span>{qty}</span>
                  </TableRow>
                ))}
              </ReportTable>
              <Handles />
            </Frame>
            <Frame $x={316} $y={125} $w={195} $h={59}>
              <NoteText>
                This report contains data
                <br />
                about the quantity of
                <br />
                electronic products sold.
              </NoteText>
              <Handles />
            </Frame>
            <ContextMenu $x={243} $y={225} $w={148}>
              <MenuRow><MenuIcon $w={30}><EditReportIcon /></MenuIcon>Edit Report</MenuRow>
              <MenuRow><MenuIcon $w={30}><SizeIcon /></MenuIcon>Size and Position...</MenuRow>
              <MenuRow $hot>
                <MenuIcon $w={30}><AlignIcon side="left" /></MenuIcon>
                Align
                <MenuArrow><Tri $dir="right" $color="#a0a8ae" /></MenuArrow>
              </MenuRow>
              <MenuRow><MenuIcon $w={30}><DeleteIcon /></MenuIcon>Delete</MenuRow>
            </ContextMenu>
            <ContextMenu $x={386} $y={269} $w={116} $z={2}>
              <MenuRow><MenuIcon $w={31}><AlignIcon side="left" /></MenuIcon>Align Left</MenuRow>
              <MenuRow><MenuIcon $w={31}><AlignIcon side="right" /></MenuIcon>Align Right</MenuRow>
              <MenuRow><MenuIcon $w={31}><AlignIcon side="top" /></MenuIcon>Align Top</MenuRow>
              <MenuRow><MenuIcon $w={31}><AlignIcon side="bottom" /></MenuIcon>Align Bottom</MenuRow>
            </ContextMenu>
          </Canvas>
          <VBar $w={16}>
            <ArrowBtn $h={18}><Tri $dir="up" /></ArrowBtn>
            <VThumb $w={14} $h={132} />
            <ArrowBtn $h={18} $end><Tri $dir="down" /></ArrowBtn>
          </VBar>
          <HBar>
            <ArrowBtn $w={17}><Tri $dir="left" /></ArrowBtn>
            <HThumb $w={365}>|||</HThumb>
            <ArrowBtn $w={17} $after><Tri $dir="right" /></ArrowBtn>
          </HBar>
          <VBar $w={16} />
        </DocGrid>
      </DocPane>
    </Main>
    <TabDock>
      <DockMenu><WindowsIcon /><Caret /></DockMenu>
      <DockTab><DocumentBadge size={16} />Document</DockTab>
    </TabDock>
    <StatusBar>
      <StatusCell $w={542} $left={2} $right={0} $first>Done</StatusCell>
      <StatusCell $w={121} $left={9} $right={11}><DocBlue w={13} h={15} /><StatusGrow $lead={2}>5 Reports</StatusGrow><Caret /></StatusCell>
      <StatusCell $w={141} $left={9} $right={6}><PdfIcon /><StatusGrow>PDF</StatusGrow><Caret /></StatusCell>
      <StatusCell $w={139} $left={9} $right={10} $last><TabIcon /><StatusGrow>Single Tab</StatusGrow><Caret /></StatusCell>
    </StatusBar>
  </Shell>
);

export default App;
